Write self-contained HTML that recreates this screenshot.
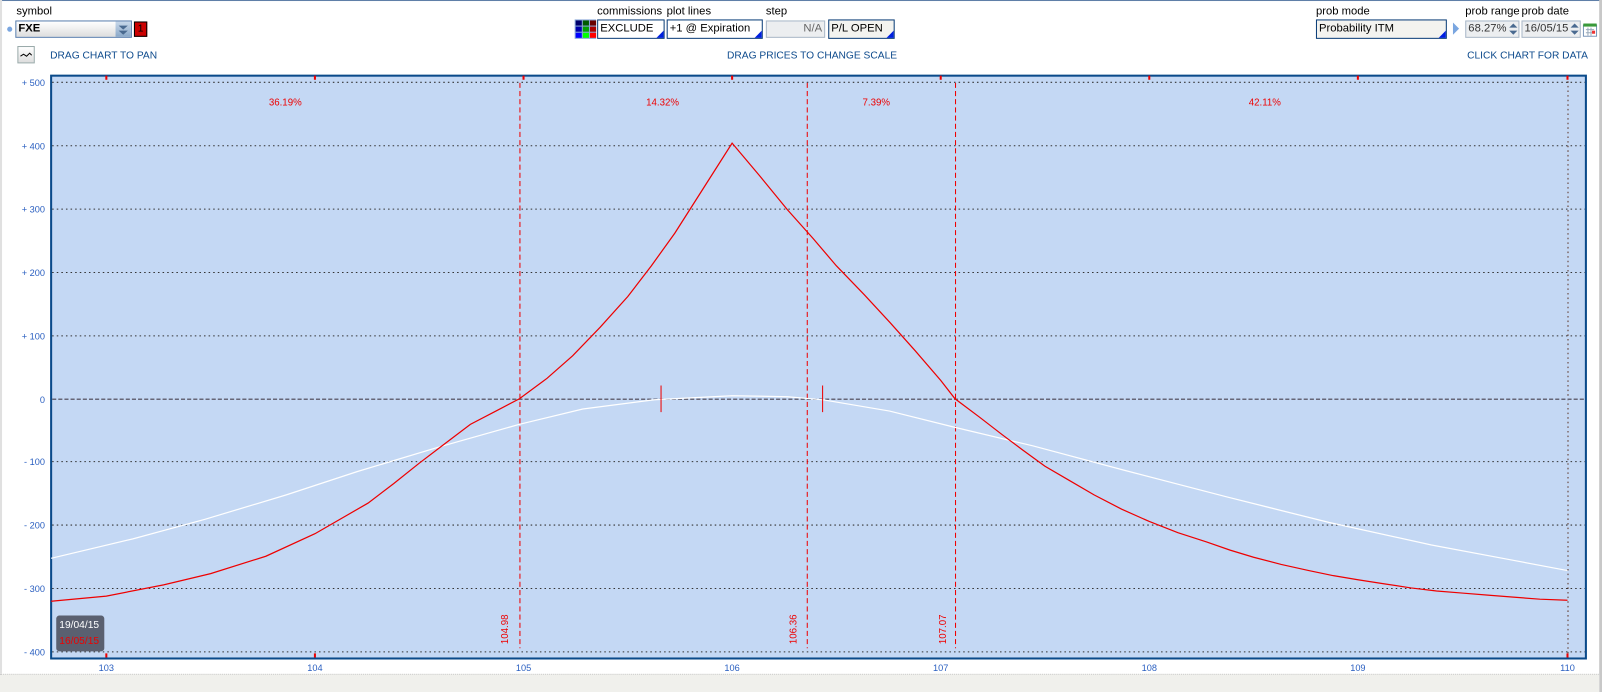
<!DOCTYPE html>
<html><head><meta charset="utf-8"><style>
html,body{margin:0;padding:0;background:#fff;overflow:hidden}
body{width:1602px;height:692px;position:relative;font-family:"Liberation Sans",sans-serif}
#w{position:absolute;left:0;top:0;width:1567px;height:677px;transform:scale(1.0225);transform-origin:0 0}
.a{position:absolute;white-space:nowrap}
.lbl{font-size:11px;color:#000}
.box{position:absolute;border:1px solid #0a3d78;background:#fff;font-size:11px;line-height:17px;padding-left:2px;box-sizing:border-box}
.box:after{content:"";position:absolute;right:0;bottom:0;border-left:7px solid transparent;border-bottom:7px solid #0020e0}
.blue{color:#0d4a8c;font-size:10px}
.yl{position:absolute;left:0;width:44px;text-align:right;font-size:9px;color:#2a5fc0}
.xl{position:absolute;font-size:9px;color:#2a5fc0;width:30px;text-align:center}
</style></head><body><div id="w">
<div class="a" style="left:0;top:0;width:1567px;height:1px;background:#5f7fa8"></div>
<div class="a" style="left:1564px;top:0;width:3px;height:677px;background:#c8c8c8"></div>
<div class="a" style="left:0;top:0;width:2px;height:677px;background:#e0e0e0"></div>
<div class="a" style="left:0;top:659px;width:1564px;height:18px;background:#f0f0ec;border-top:1px dotted #ccc"></div>

<div class="a lbl" style="left:16px;top:5px">symbol</div>
<div class="a" style="left:7px;top:26px;width:5px;height:5px;border-radius:50%;background:#7aa6e0"></div>
<div class="a" style="left:15px;top:20px;width:114px;height:17px;border:1px solid #5a7fae;box-sizing:border-box;background:linear-gradient(#fff,#ddd);font-size:11px;font-weight:bold;line-height:15px;padding-left:2px">FXE</div>
<div class="a" style="left:113px;top:21px;width:15px;height:15px;background:linear-gradient(#c8d8ea,#8aa8c8)"><svg width="15" height="15"><path d="M3 4h9l-4.5 4z M3 9h9l-4.5 4z" fill="#4a6a90"/></svg></div>
<div class="a" style="left:131px;top:21px;width:13px;height:15px;background:#c00;border:1px solid #000;box-sizing:border-box;font-size:10px;line-height:13px;text-align:center">1</div>

<div class="a" style="left:17px;top:45px;width:17px;height:17px;border:1px solid #9aa;background:linear-gradient(#fff,#ddd);box-sizing:border-box"><svg width="15" height="15"><path d="M2 9 L5 7 L8 9 L11 6 L13 8" stroke="#000" fill="none"/></svg></div>
<div class="a blue" style="left:49px;top:49px">DRAG CHART TO PAN</div>
<div class="a blue" style="left:711px;top:49px">DRAG PRICES TO CHANGE SCALE</div>
<div class="a blue" style="right:14px;top:49px">CLICK CHART FOR DATA</div>

<div class="a" style="left:562px;top:19px;width:21px;height:19px;display:grid;grid-template-columns:repeat(3,6px);gap:1px;background:#8aa8d8;padding:1px;box-sizing:border-box">
<i style="background:#00006a"></i><i style="background:#005a00"></i><i style="background:#6a0000"></i>
<i style="background:#0000aa"></i><i style="background:#00a000"></i><i style="background:#aa0000"></i>
<i style="background:#0000ff"></i><i style="background:#00ff00"></i><i style="background:#ff0000"></i></div>
<div class="a lbl" style="left:584px;top:5px">commissions</div>
<div class="box" style="left:584px;top:19px;width:66px;height:19px">EXCLUDE</div>
<div class="a lbl" style="left:652px;top:5px">plot lines</div>
<div class="box" style="left:652px;top:19px;width:94px;height:19px">+1 @ Expiration</div>
<div class="a lbl" style="left:749px;top:5px">step</div>
<div class="a" style="left:749px;top:20px;width:58px;height:17px;border:1px solid #aab8c8;background:#eceef0;font-size:11px;line-height:15px;text-align:right;padding-right:2px;box-sizing:border-box;color:#666">N/A</div>
<div class="box" style="left:810px;top:19px;width:65px;height:19px;background:#f3f3ef">P/L OPEN</div>

<div class="a lbl" style="left:1287px;top:5px">prob mode</div>
<div class="box" style="left:1287px;top:19px;width:128px;height:19px;background:#f3f3ef">Probability ITM</div>
<div class="a" style="left:1421px;top:22px;width:0;height:0;border-left:6px solid #7aa6e0;border-top:6px solid transparent;border-bottom:6px solid transparent"></div>
<div class="a lbl" style="left:1433px;top:5px">prob range</div>
<div class="a" style="left:1433px;top:20px;width:53px;height:17px;border:1px solid #aab8c8;background:#eceef0;font-size:11px;line-height:15px;padding-left:2px;box-sizing:border-box;color:#333">68.27%</div>
<div class="a lbl" style="left:1488px;top:5px">prob date</div>
<div class="a" style="left:1488px;top:20px;width:58px;height:17px;border:1px solid #aab8c8;background:#eceef0;font-size:11px;line-height:15px;padding-left:2px;box-sizing:border-box;color:#333">16/05/15</div>
<svg class="a" style="left:1474px;top:20px" width="12" height="17"><path d="M2 7l4-4 4 4z M2 10l4 4 4-4z" fill="#4a6a90"/></svg>
<svg class="a" style="left:1534px;top:20px" width="12" height="17"><path d="M2 7l4-4 4 4z M2 10l4 4 4-4z" fill="#4a6a90"/></svg>
<svg class="a" style="left:1548px;top:22px" width="14" height="14"><rect x="0.5" y="2.5" width="13" height="11" fill="#fff" stroke="#6a8ab0"/><rect x="0.5" y="1" width="13" height="3" fill="#3a9a3a"/><path d="M3 7h8M3 10h8M5 5v8M8 5v8" stroke="#9ab"/><rect x="9" y="8" width="3" height="3" fill="#e33"/></svg>

<svg class="a" style="left:0;top:0" width="1567" height="677">
<rect x="50" y="74" width="1501" height="570" fill="#c4d8f4" stroke="#0a4a8a" stroke-width="2"/>
<g stroke="#333" stroke-dasharray="1.5 3" stroke-width="1">
<path d="M51 80.5H1550M51 142.5H1550M51 204.5H1550M51 266.5H1550M51 328.5H1550M51 451.5H1550M51 513.5H1550M51 575.5H1550M51 637.5H1550"/>
<path d="M1533.5 75V643" stroke="#5a3020"/>
</g>
<path d="M51 390.5H1550" stroke="#667" stroke-width="1.5" stroke-dasharray="4 2"/>
<g fill="#e00"><rect x="103" y="74" width="2" height="4"/><rect x="307" y="74" width="2" height="4"/><rect x="511" y="74" width="2" height="4"/><rect x="715" y="74" width="2" height="4"/><rect x="919" y="74" width="2" height="4"/><rect x="1123" y="74" width="2" height="4"/><rect x="1327" y="74" width="2" height="4"/><rect x="1532" y="74" width="2" height="4"/>
<rect x="103" y="639" width="2" height="4"/><rect x="307" y="639" width="2" height="4"/><rect x="1532" y="639" width="2" height="4"/></g>
<g stroke="#e00" stroke-dasharray="5 3" stroke-width="1">
<path d="M508.5 81V634M789.5 81V634M934.5 81V634"/></g>
<polyline fill="none" stroke="#fff" stroke-width="1.2" points="50,546 130,527 200,508 280,484 350,461 430,437 508,415 570,400 640,391 716,387 770,388 805,391 870,402 934,418 1010,436 1100,460 1200,486 1300,511 1400,533 1480,548 1533,558"/>
<polyline fill="none" stroke="#e00" stroke-width="1.2" points="50,588 104,583 160,572 206,561 260,544 308,522 360,492 385,473 410,453 435,434 460,415 485,402 508,390 535,370 560,348 587,320 614,290 637,260 660,228 688,184 716,140 743,172 770,205 795,233 818,260 845,288 870,315 895,343 920,372 934,390 958,408 980,425 1000,440 1022,456 1046,470 1070,484 1097,498 1124,510 1152,521 1180,530 1203,538 1226,545 1253,552 1280,558 1304,563 1328,567 1354,571 1380,575 1405,578 1430,580 1455,582 1480,584 1506,586 1533,587"/>
<path d="M646.5 377V403M804.5 377V403" stroke="#e00"/>
<g font-family="Liberation Sans,sans-serif" font-size="9.5" fill="#e00">
<text x="279" y="103" text-anchor="middle">36.19%</text>
<text x="648" y="103" text-anchor="middle">14.32%</text>
<text x="857" y="103" text-anchor="middle">7.39%</text>
<text x="1237" y="103" text-anchor="middle">42.11%</text>
<text transform="translate(497,630) rotate(-90)">104.98</text>
<text transform="translate(779,630) rotate(-90)">106.36</text>
<text transform="translate(925,630) rotate(-90)">107.07</text>
</g>
<rect x="55" y="602" width="47" height="35" rx="3" fill="#5a6070"/>
<text x="58" y="614" font-family="Liberation Sans,sans-serif" font-size="10" fill="#fff">19/04/15</text>
<text x="58" y="630" font-family="Liberation Sans,sans-serif" font-size="10" fill="#e00">16/05/15</text>
</svg>
<div class="yl" style="top:76px">+ 500</div>
<div class="yl" style="top:138px">+ 400</div>
<div class="yl" style="top:200px">+ 300</div>
<div class="yl" style="top:262px">+ 200</div>
<div class="yl" style="top:324px">+ 100</div>
<div class="yl" style="top:386px">0</div>
<div class="yl" style="top:447px">- 100</div>
<div class="yl" style="top:509px">- 200</div>
<div class="yl" style="top:571px">- 300</div>
<div class="yl" style="top:633px">- 400</div>
<div class="xl" style="left:89px;top:648px">103</div>
<div class="xl" style="left:293px;top:648px">104</div>
<div class="xl" style="left:497px;top:648px">105</div>
<div class="xl" style="left:701px;top:648px">106</div>
<div class="xl" style="left:905px;top:648px">107</div>
<div class="xl" style="left:1109px;top:648px">108</div>
<div class="xl" style="left:1313px;top:648px">109</div>
<div class="xl" style="left:1518px;top:648px">110</div>
</div></body></html>
